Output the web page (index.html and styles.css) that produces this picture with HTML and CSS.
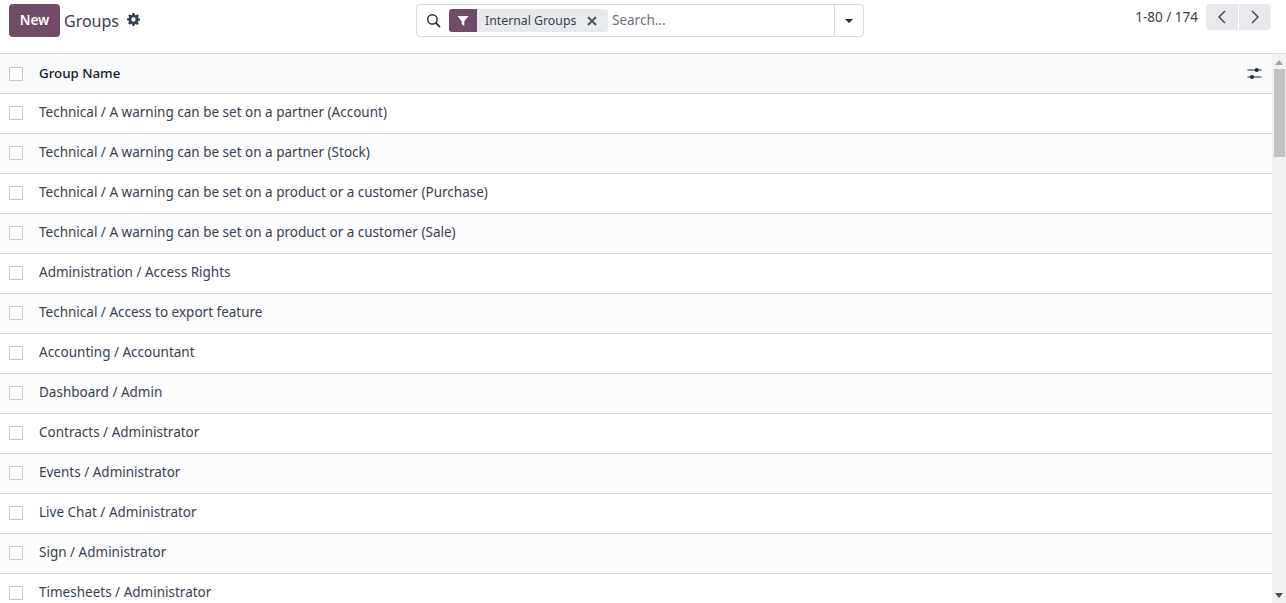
FILE: index.html
```html
<!DOCTYPE html>
<html lang="en">
<head>
<meta charset="utf-8">
<title>Groups</title>
<link rel="stylesheet" href="styles.css">
</head>
<body>
<header class="panel">
  <div class="panel-left">
    <button class="btn-new">New</button>
    <span class="title">Groups</span>
    <svg class="gear" viewBox="0 0 24 24" width="13" height="13"><path fill="#374151" fill-rule="evenodd" d="M10 0h4l.6 3.3 1.900.8L19.300 2.200l2.800 2.800-1.900 2.800.8 1.900L24 10v4l-3.300.6-.8 1.900 1.900 2.800-2.800 2.800-2.800-1.900-1.900.8L14 24h-4l-.6-3.300-1.900-.8-2.800 1.900-2.800-2.800 1.900-2.800-.8-1.900L0 14v-4l3.300-.6.8-1.900L2.200 5 5 2.200l2.800 1.900 1.900-.8zM12 8a4 4 0 1 0 0 8 4 4 0 0 0 0-8z"/></svg>
  </div>
  <div class="search">
    <svg class="mag" viewBox="0 0 16 16" width="15" height="15"><circle cx="6.800" cy="6.800" r="5" fill="none" stroke="#1f2937" stroke-width="1.500"/><path d="M10.500 10.500l4 4" stroke="#1f2937" stroke-width="1.700" stroke-linecap="round"/></svg>
    <div class="facet">
      <span class="facet-icon"><svg viewBox="0 0 12 12" width="12" height="12"><path fill="#fff" d="M.5 1h11L7.300 6.200V11L4.700 9.300V6.200z"/></svg></span>
      <span class="facet-label">Internal Groups</span>
      <svg class="facet-x" viewBox="0 0 10 10" width="10" height="10"><path d="M1 1l8 8M9 1l-8 8" stroke="#4b5563" stroke-width="2"/></svg>
    </div>
    <span class="placeholder">Search...</span>
    <span class="search-drop"><i class="caret"></i></span>
  </div>
  <div class="pager">
    <span class="pager-text">1-80 / 174</span>
    <div class="pager-btns">
      <button class="pager-btn"><svg viewBox="0 0 10 16" width="10" height="16"><path d="M8 2L2 8l6 6" fill="none" stroke="#374151" stroke-width="1.400"/></svg></button>
      <button class="pager-btn"><svg viewBox="0 0 10 16" width="10" height="16"><path d="M2 2l6 6-6 6" fill="none" stroke="#374151" stroke-width="1.400"/></svg></button>
    </div>
  </div>
</header>
<div class="content">
  <div class="list">
    <div class="row head">
      <span class="check"></span><span class="name">Group Name</span>
      <svg class="sliders" viewBox="0 0 16 14" width="16" height="14"><path d="M1.500 3h14M1.500 10h14" stroke="#1f2937" stroke-width="1.100"/><circle cx="10.700" cy="3" r="2.100" fill="#1f2937"/><circle cx="6" cy="10" r="2.100" fill="#1f2937"/></svg>
    </div>
    <div class="row"><span class="check"></span><span class="name">Technical / A warning can be set on a partner (Account)</span></div>
    <div class="row"><span class="check"></span><span class="name">Technical / A warning can be set on a partner (Stock)</span></div>
    <div class="row"><span class="check"></span><span class="name">Technical / A warning can be set on a product or a customer (Purchase)</span></div>
    <div class="row"><span class="check"></span><span class="name">Technical / A warning can be set on a product or a customer (Sale)</span></div>
    <div class="row"><span class="check"></span><span class="name">Administration / Access Rights</span></div>
    <div class="row"><span class="check"></span><span class="name">Technical / Access to export feature</span></div>
    <div class="row"><span class="check"></span><span class="name">Accounting / Accountant</span></div>
    <div class="row"><span class="check"></span><span class="name">Dashboard / Admin</span></div>
    <div class="row"><span class="check"></span><span class="name">Contracts / Administrator</span></div>
    <div class="row"><span class="check"></span><span class="name">Events / Administrator</span></div>
    <div class="row"><span class="check"></span><span class="name">Live Chat / Administrator</span></div>
    <div class="row"><span class="check"></span><span class="name">Sign / Administrator</span></div>
    <div class="row"><span class="check"></span><span class="name">Timesheets / Administrator</span></div>
  </div>
  <div class="scrollbar">
    <i class="arrow-up"></i>
    <div class="track"><div class="thumb"></div></div>
    <i class="arrow-down"></i>
  </div>
</div>
</body>
</html>
```
FILE: styles.css
```css
* { box-sizing: border-box; }
html, body { margin: 0; height: 100%; overflow: hidden; }
body {
  display: flex;
  flex-direction: column;
  background: #fff;
  color: #374151;
  font-family: "Noto Sans", sans-serif;
  font-size: 13.5px;
}
.panel {
  position: relative;
  flex: none;
  height: 54px;
  border-bottom: 1px solid #d8dadd;
  display: flex;
  justify-content: space-between;
  padding: 4px 15px 0 9px;
}
.panel-left { display: flex; align-items: center; height: 33px; }
.btn-new {
  width: 51px;
  height: 33px;
  border: 0;
  border-radius: 4px;
  background: #714b67;
  color: #fff;
  font: 600 13.5px "Noto Sans", sans-serif;
  padding: 0 0 2px;
}
.title { margin-left: 4px; font-size: 16px; color: #374151; }
.gear { margin-left: 8px; margin-top: -3px; }
.search {
  position: absolute;
  left: 416px;
  top: 4px;
  width: 448px;
  height: 33px;
  border: 1px solid #d8dadd;
  border-radius: 4px;
  display: flex;
  align-items: center;
  padding-left: 9px;
}
.mag { flex: none; }
.facet {
  margin-left: 8px;
  height: 23px;
  width: 159px;
  flex: none;
  display: flex;
  align-items: center;
  background: #e7e9ed;
  border-radius: 3px;
  overflow: hidden;
}
.facet-icon {
  width: 28px;
  height: 23px;
  background: #714b67;
  display: flex;
  align-items: center;
  justify-content: center;
}
.facet-label { margin-left: 8px; padding-bottom: 1px; font-size: 12.3px; color: #374151; white-space: nowrap; }
.facet-x { margin-left: auto; margin-right: 11px; }
.placeholder { margin-left: 4px; padding-bottom: 1px; color: #6b7280; }
.search-drop {
  margin-left: auto;
  width: 29px;
  height: 31px;
  border-left: 1px solid #d8dadd;
  display: flex;
  align-items: center;
  justify-content: center;
}
.caret {
  border-top: 4px solid #1f2937;
  border-left: 4px solid transparent;
  border-right: 4px solid transparent;
}
.pager { display: flex; align-items: flex-start; gap: 8px; }
.pager-text { margin-top: 4px; }
.pager-btns { display: flex; gap: 1px; margin-top: 0; }
.pager-btn {
  width: 32px;
  height: 26px;
  padding: 0;
  border: 0;
  background: #e7e9ed;
  display: flex;
  align-items: center;
  justify-content: center;
}
.pager-btn:first-child { border-radius: 4px 0 0 4px; }
.pager-btn:last-child { border-radius: 0 4px 4px 0; }
.content { flex: 1; min-height: 0; display: flex; }
.list { flex: 1; min-width: 0; overflow: hidden; }
.row {
  height: 40px;
  border-bottom: 1px solid #d8dadd;
  display: flex;
  align-items: center;
  padding: 0 10px 0 9px;
  background: #fff;
}
.row:nth-child(odd) { background: #fcfcfc; }
.row.head { background: #f9fafb; font-size: 13.3px; font-weight: 500; color: #111827; }
.check {
  width: 14px;
  height: 14px;
  margin-bottom: 1px;
  border: 1px solid #c4c7cc;
  border-radius: 1px;
  background: #fff;
  flex: none;
}
.head .check { margin-bottom: 0; }
.name { margin-left: 16px; padding-bottom: 3px; white-space: nowrap; }
.head .name { padding-bottom: 2px; }
.sliders { margin-left: auto; }
.scrollbar {
  flex: none;
  width: 14px;
  background: #f1f1f1;
  display: flex;
  flex-direction: column;
  align-items: center;
}
.arrow-up {
  margin-top: 6px;
  border-bottom: 5px solid #a3a3a3;
  border-left: 4px solid transparent;
  border-right: 4px solid transparent;
}
.track { flex: 1; width: 100%; padding-top: 4px; }
.thumb { width: 11px; margin-left: 2px; height: 88px; background: #c1c1c1; }
.arrow-down {
  margin-bottom: 5px;
  border-top: 5px solid #505050;
  border-left: 4px solid transparent;
  border-right: 4px solid transparent;
}
```
